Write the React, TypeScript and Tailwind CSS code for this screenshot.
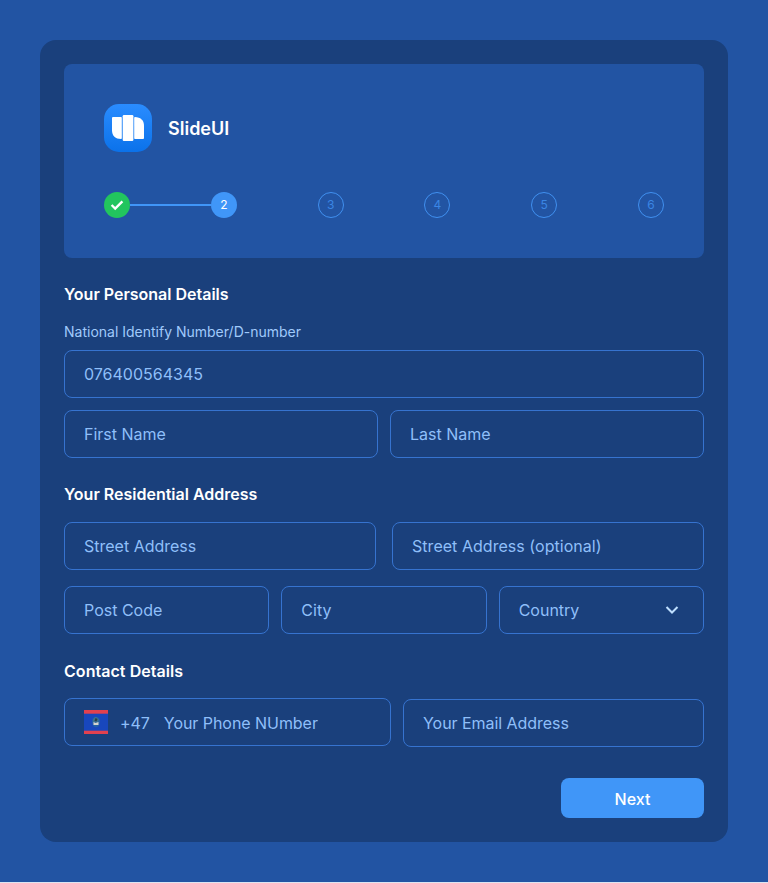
import type { ReactNode } from "react";

function Field({ children, className = "" }: { children: ReactNode; className?: string }) {
  return (
    <div
      className={`flex h-12 items-center rounded-lg border border-[#3673cf] pl-[19px] text-base leading-6 text-[#8fbff9] ${className}`}
    >
      {children}
    </div>
  );
}

function SectionTitle({ children, className = "" }: { children: ReactNode; className?: string }) {
  return <h2 className={`text-base leading-6 font-semibold text-white ${className}`}>{children}</h2>;
}

function Logo() {
  return (
    <svg width="48" height="48" viewBox="0 0 48 48" aria-hidden="true">
      <defs>
        <linearGradient id="tile" x1="0" y1="0" x2="0" y2="1">
          <stop offset="0" stopColor="#2a8cff" />
          <stop offset="1" stopColor="#0b72ea" />
        </linearGradient>
      </defs>
      <rect width="48" height="48" rx="15" fill="url(#tile)" />
      <path
        d="M9 13h8q.8 0 .8.800v20.400q0 .8-.8.800C11.500 35 8 31.500 8 26.500V14q0-1 1-1Z"
        fill="#fff"
      />
      <rect x="18.700" y="11" width="10.700" height="26" rx="1.200" fill="#fff" />
      <path
        d="M31 13C36.500 13 40 16.500 40 21.500V34q0 1-1 1h-8q-.8 0-.8-.8V13.800q0-.8.8-.8Z"
        fill="#fff"
      />
    </svg>
  );
}

function Flag() {
  return (
    <svg width="24" height="24" viewBox="0 0 24 24" aria-hidden="true">
      <rect width="24" height="24" fill="#1847bd" />
      <rect width="24" height="3.700" fill="#e2414f" />
      <rect y="20.700" width="24" height="3.300" fill="#e2414f" />
      <ellipse cx="12" cy="12" rx="4" ry="5.200" fill="#245fa8" />
      <path d="M9 9.500l2-2.500 2 .5 2 2-1 3H9Z" fill="#3c7391" />
      <path d="M11.500 8l2 1-1 2.500-2-.5Z" fill="#293e48" />
      <path d="M9.500 12l2 1 3-1v3h-5Z" fill="#d5d5cf" />
    </svg>
  );
}

function Stepper() {
  return (
    <div className="mt-10 flex items-center justify-between text-[12px] leading-4">
      <div className="flex size-[26px] items-center justify-center rounded-full bg-[#22c55e]">
        <svg width="14" height="12" viewBox="0 0 14 12" fill="none" aria-hidden="true">
          <path d="M1.600 6 5.200 9.500 12.400 2.300" stroke="#fff" strokeWidth="2.400" />
        </svg>
      </div>
      <div className="h-0.5 flex-1 bg-[#4096f8]" />
      <div className="flex size-[26px] items-center justify-center rounded-full bg-[#4096f8] text-white">2</div>
      {[3, 4, 5, 6].map((n) => (
        <div
          key={n}
          className="ml-[80.8px] flex size-[26px] items-center justify-center rounded-full border border-[#4090f0] text-[#3b86e4]"
        >
          {n}
        </div>
      ))}
    </div>
  );
}

export default function App() {
  return (
    <div className="h-[883px] bg-[#dce5f2] pb-px font-['Inter',sans-serif]">
      <main className="h-[882px] bg-[#2254a3] p-10">
        <div className="h-[802px] rounded-2xl bg-[#1a407c] p-6">
          <header className="h-[194px] rounded-lg bg-[#2254a3] p-10">
            <div className="flex items-center gap-4">
              <Logo />
              <span className="pt-0.5 text-lg leading-7 font-semibold text-white">SlideUI</span>
            </div>
            <Stepper />
          </header>

          <SectionTitle className="mt-6">Your Personal Details</SectionTitle>
          <p className="mt-4 text-sm leading-5 text-[#a0cafb]">National Identify Number/D-number</p>
          <Field className="mt-2">076400564345</Field>
          <div className="mt-3 grid grid-cols-2 gap-3">
            <Field>First Name</Field>
            <Field>Last Name</Field>
          </div>

          <SectionTitle className="mt-6">Your Residential Address</SectionTitle>
          <div className="mt-4 grid grid-cols-2 gap-4">
            <Field>Street Address</Field>
            <Field className="tracking-[0.04px]">Street Address (optional)</Field>
          </div>
          <div className="mt-4 grid grid-cols-3 gap-3">
            <Field>Post Code</Field>
            <Field>City</Field>
            <Field className="justify-between pr-[24px]">
              Country
              <svg width="14" height="10" viewBox="0 0 14 10" fill="none" aria-hidden="true">
                <path d="M1.500 2 7 7.500 12.500 2" stroke="#bfdffe" strokeWidth="2" />
              </svg>
            </Field>
          </div>

          <SectionTitle className="mt-[25px] tracking-[0.05px]">Contact Details</SectionTitle>
          <div className="mt-[15px] flex gap-3">
            <Field className="w-[327px] tracking-[-0.05px]">
              <Flag />
              <span className="ml-3 pt-px">+47</span>
              <span className="ml-[14px] pt-px">Your Phone NUmber</span>
            </Field>
            <Field className="mt-px flex-1 tracking-[-0.05px]">Your Email Address</Field>
          </div>

          <div className="mt-[31px] flex justify-end">
            <button className="h-10 w-[143px] rounded-lg bg-[#4096f8] pt-px text-base leading-6 font-medium text-white">
              Next
            </button>
          </div>
        </div>
      </main>
    </div>
  );
}
